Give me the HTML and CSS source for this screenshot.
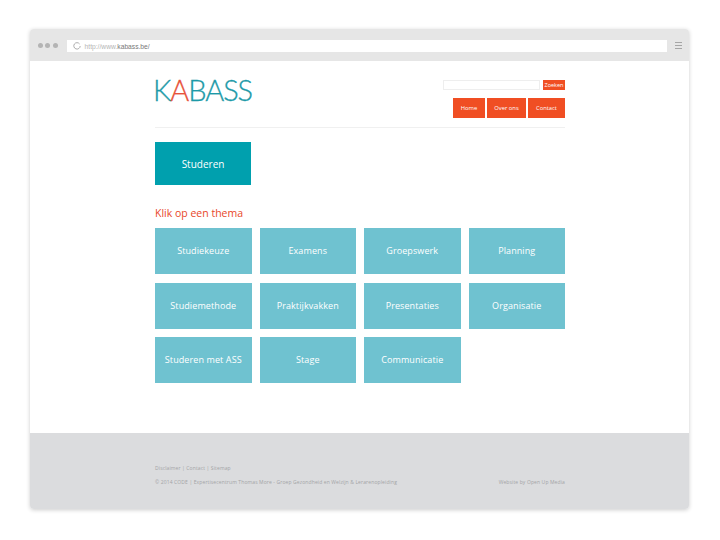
FILE: index.html
```html
<!DOCTYPE html>
<html lang="en">
<head>
  <meta charset="UTF-8" />
  <title>KABASS</title>
  <link rel="stylesheet" href="styles.css">
</head>
<body>
  <div class="window">
    <div class="chrome">
      <div class="dots"><i></i><i></i><i></i></div>
      <div class="address">
        <svg class="reload" width="8" height="8" viewBox="0 0 8 8"><path d="M6.6 2A3.2 3.2 0 1 0 7.2 4" fill="none" stroke="#999" stroke-width="0.8"/></svg>
        <span class="url">http://www.<b>kabass.be/</b></span>
      </div>
      <div class="burger"><i></i><i></i><i></i></div>
    </div>

    <div class="page">
      <div class="wrap">
        <header class="header">
          <div class="logo">K<span>A</span>BASS</div>
          <div class="header-right">
            <div class="search">
              <input type="text" class="search-input" />
              <button class="search-button">Zoeken</button>
            </div>
            <nav class="nav">
              <a class="nav-home">Home</a>
              <a class="nav-over">Over ons</a>
              <a class="nav-contact">Contact</a>
            </nav>
          </div>
        </header>

        <a class="current">Studeren</a>

        <h2 class="title">Klik op een thema</h2>

        <div class="tiles">
          <a>Studiekeuze</a>
          <a>Examens</a>
          <a>Groepswerk</a>
          <a>Planning</a>
          <a>Studiemethode</a>
          <a>Praktijkvakken</a>
          <a>Presentaties</a>
          <a>Organisatie</a>
          <a>Studeren met ASS</a>
          <a>Stage</a>
          <a>Communicatie</a>
        </div>
      </div>
    </div>

    <footer class="footer">
      <div class="wrap">
        <div class="footer-links">Disclaimer | Contact | Sitemap</div>
        <div class="footer-row">
          <span>© 2014 CODE | Expertisecentrum Thomas More - Groep Gezondheid en Welzijn &amp; Lerarenopleiding</span>
          <span>Website by Open Up Media</span>
        </div>
      </div>
    </footer>
  </div>
</body>
</html>
```

FILE: styles.css
```css
body {
  margin: 0;
  height: 540px;
  background: #fff;
  font-family: 'Open Sans', sans-serif;
  overflow: hidden;
}

.window {
  width: 659px;
  margin: 29px 0 0 30px;
  border-radius: 4px;
  overflow: hidden;
  box-shadow: 0 1px 4px rgba(0, 0, 0, 0.2);
}

.chrome {
  display: flex;
  align-items: center;
  height: 32px;
  background: #e6e6e6;
}

.dots {
  display: flex;
  gap: 2.3px;
  margin-left: 8px;
}

.dots i {
  width: 5px;
  height: 5px;
  border-radius: 50%;
  background: #b4b4b4;
}

.address {
  display: flex;
  align-items: center;
  width: 600px;
  height: 12px;
  margin: 2px 0 0 9px;
  padding-left: 6px;
  box-sizing: border-box;
  background: #fff;
}

.reload {
  margin-right: 4px;
}

.url {
  font-family: 'Liberation Sans', sans-serif;
  font-size: 6.7px;
  color: #b5b5b5;
}

.url b {
  font-weight: normal;
  color: #777;
}

.burger {
  margin-left: 8px;
}

.burger i {
  display: block;
  width: 7px;
  height: 1px;
  margin: 2px 0;
  background: #a5a5a5;
}

.page {
  height: 372px;
  background: #fff;
}

.wrap {
  width: 410px;
  margin-left: 125px;
}

.header {
  display: flex;
  justify-content: space-between;
  height: 66px;
  border-bottom: 1px solid #f0f0f0;
}

.logo {
  margin: 11px 0 0 -2px;
  font-family: 'Lato', sans-serif;
  font-weight: 300;
  font-size: 29px;
  line-height: 36px;
  letter-spacing: -1.1px;
  color: #1d9aa8;
  -webkit-text-stroke: 0.3px;
}

.logo span {
  color: #e8523a;
}

.header-right {
  display: flex;
  flex-direction: column;
  align-items: flex-end;
}

.search {
  display: flex;
  gap: 3px;
  margin-top: 19px;
}

.search-input {
  width: 97px;
  height: 10px;
  padding: 0;
  box-sizing: border-box;
  border: 1px solid #eeeeee;
  background: #fff;
}

.search-button {
  width: 22px;
  height: 10px;
  padding: 0;
  border: 0;
  background: #f04e23;
  color: #fff;
  font-family: 'Open Sans', sans-serif;
  font-size: 5.5px;
}

.nav {
  display: flex;
  gap: 2px;
  margin-top: 8px;
}

.nav a {
  height: 20px;
  line-height: 20px;
  text-align: center;
  background: #f04e23;
  color: #fff;
  font-size: 5.8px;
}

.nav-home {
  width: 32px;
}

.nav-over {
  width: 39px;
}

.nav-contact {
  width: 37px;
}

.current {
  display: block;
  width: 96px;
  height: 43px;
  margin-top: 14px;
  line-height: 45px;
  text-align: center;
  background: #00a0ae;
  color: #fff;
  font-size: 10px;
}

.title {
  margin: 21px 0 8px;
  font-size: 10.5px;
  line-height: 14px;
  font-weight: normal;
  color: #e8472a;
}

.tiles {
  display: grid;
  grid-template-columns: repeat(4, 96.5px);
  grid-auto-rows: 46px;
  column-gap: 8px;
  row-gap: 8.5px;
}

.tiles a {
  line-height: 46px;
  text-align: center;
  background: #6fc2d0;
  color: #fff;
  font-size: 9px;
  letter-spacing: 0.1px;
}

.footer {
  height: 76px;
  overflow: hidden;
  background: #dbdcde;
  color: #a3a4a6;
  font-size: 5px;
  letter-spacing: 0.12px;
}

.footer-links {
  margin-top: 32px;
  line-height: 7px;
}

.footer-row {
  display: flex;
  justify-content: space-between;
  margin-top: 7px;
  line-height: 7px;
}
```
